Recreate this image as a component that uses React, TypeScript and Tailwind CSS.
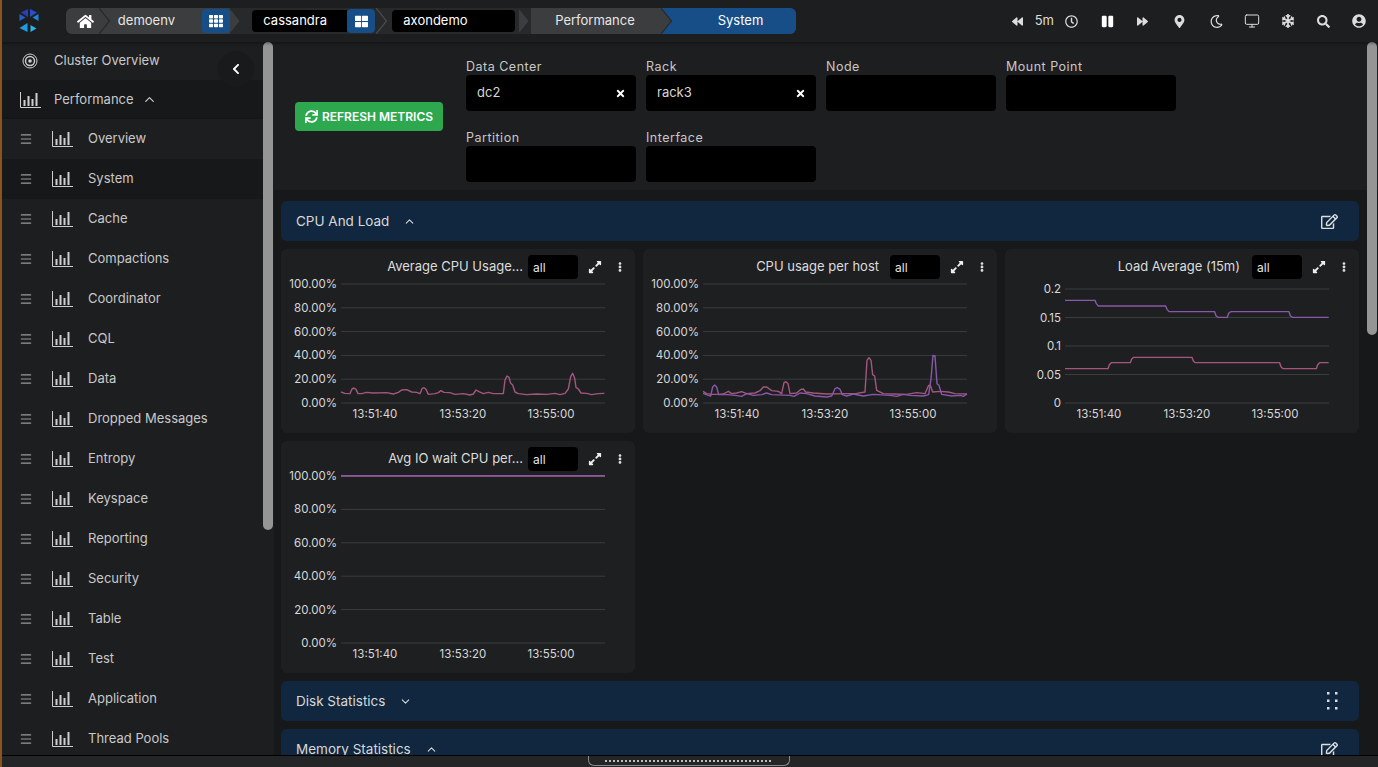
import { FaHome, FaTh, FaThLarge, FaSync, FaBackward, FaForward, FaRegClock, FaPause, FaMapMarkerAlt, FaRegMoon, FaSnowflake, FaSearch, FaUserCircle, FaTimes, FaExpandAlt, FaEllipsisV, FaRegEdit, FaChevronLeft } from "react-icons/fa";
import { Monitor, Menu, ChevronUp, ChevronDown } from "lucide-react";

type Line = { color: string; points: number[][] };

interface ChartProps {
  title: string;
  titleClass: string;
  height: number;
  ox: number;
  oy: number;
  top: number;
  bottom: number;
  grid: string[];
  lines: Line[];
}

const pink = "#a4567f";
const purple = "#8a58a8";

const cpuAvg = [[213,606],[225,610],[240,611],[246,597],[252,594],[258,598],[264,611],[275,611],[290,607],[310,609],[350,608],[370,612],[385,607],[395,600],[410,599],[425,606],[440,607],[450,611],[456,596],[462,593],[468,598],[475,613],[495,611],[505,608],[513,602],[522,607],[540,608],[555,613],[580,611],[600,615],[610,612],[618,600],[627,605],[640,611],[655,607],[670,611],[700,611],[705,570],[711,558],[717,562],[722,580],[728,585],[735,606],[745,611],[770,614],[800,612],[830,613],[855,610],[870,614],[885,610],[895,597],[902,560],[908,550],[914,565],[918,592],[925,597],[933,609],[950,610],[965,614],[985,611],[1003,610]];

const cpuHostA = [[189,438],[200,445],[215,447],[235,447],[250,446],[265,438],[275,445],[290,443],[305,439],[320,445],[345,443],[360,436],[370,425],[380,425],[395,436],[415,438],[425,445],[432,412],[438,409],[444,415],[450,445],[470,443],[483,432],[490,431],[497,440],[520,443],[560,446],[620,445],[650,444],[675,440],[681,345],[687,337],[693,345],[698,388],[704,392],[710,435],[730,445],[760,446],[800,447],[830,442],[855,445],[866,420],[871,420],[878,440],[900,438],[925,440],[945,445],[981,446]];

const cpuHostB = [[189,444],[205,450],[212,452],[218,425],[224,419],[230,425],[236,448],[265,448],[285,450],[305,453],[320,445],[340,450],[365,448],[380,443],[395,448],[450,450],[462,453],[480,443],[500,445],[525,452],[560,455],[575,452],[585,430],[592,427],[600,432],[607,448],[620,452],[640,446],[670,452],[700,447],[750,450],[770,453],[790,447],[810,450],[850,452],[866,448],[873,400],[879,330],[885,332],[891,415],[897,420],[905,447],[935,452],[960,450],[970,453],[981,446]];

const loadA = [[196,332],[286,332],[290,342],[296,349],[498,349],[502,359],[508,366],[645,366],[649,378],[655,383],[683,383],[687,371],[693,366],[868,366],[872,378],[878,383],[987,383]];
const loadB = [[196,537],[325,537],[329,525],[335,519],[392,519],[396,508],[402,503],[577,503],[581,514],[587,519],[840,519],[844,531],[850,537],[950,537],[954,525],[960,519],[987,519]];

const percent = ["100.00%", "80.00%", "60.00%", "40.00%", "20.00%", "0.00%"];

function Chart({ title, titleClass, height, ox, oy, top, bottom, grid, lines }: ChartProps) {
  const step = (bottom - top) / (grid.length - 1);
  return (
    <div className="rounded-md bg-[#1e1f21]">
      <div className="flex h-[30px] items-center justify-end pr-[10px] pt-[5px] text-[#dcdcdc]">
        <span className={`text-[13px] ${titleClass}`}>{title}</span>
        <span className="flex h-6 w-[50px] items-center rounded bg-black pl-[5px] pt-[2px] text-xs text-[#e6e6e6]">all</span>
        <FaExpandAlt size={14} className="ml-[10px] mr-[13px] text-[#eeeeee]" />
        <FaEllipsisV size={10} className="text-[#dddddd]" />
      </div>
      <svg width={354} height={height} className="block" fontFamily="Inter, sans-serif" fontSize={11.5} fill="#d8d8d8">
        {grid.map((label, i) => (
          <g key={label}>
            <line x1={60} x2={324} y1={top + step * i} y2={top + step * i} stroke="#3b3c3e" strokeWidth={1} />
            <text x={56} y={top + step * i + 4} textAnchor="end">{label}</text>
          </g>
        ))}
        {["13:51:40", "13:53:20", "13:55:00"].map((t, i) => (
          <text key={t} x={94 + i * 88} y={height - 15} textAnchor="middle">{t}</text>
        ))}
        {lines.map((l, i) => (
          <polyline
            key={i}
            fill="none"
            stroke={l.color}
            strokeWidth={1.4}
            strokeLinejoin="round"
            points={l.points.map(([x, y]) => `${(x - ox) / 3 + 60},${(y - oy) / 3 + top}`).join(" ")}
          />
        ))}
      </svg>
    </div>
  );
}

function BarsIcon() {
  return (
    <svg width="21" height="16" viewBox="0 0 21 16" fill="none" className="shrink-0 text-[#cfcfcf]">
      <path d="M0.5 0v15.5H21" stroke="currentColor" strokeWidth="1" />
      <rect x="3.5" y="8" width="2" height="6" fill="currentColor" />
      <rect x="7.5" y="4" width="2" height="10" fill="currentColor" />
      <rect x="11.5" y="7" width="2" height="7" fill="currentColor" />
      <rect x="15.5" y="1" width="2" height="13" fill="currentColor" />
    </svg>
  );
}

function Logo() {
  return (
    <svg width="24" height="26" viewBox="0 0 24 26" className="shrink-0">
      <path d="M11 1 4 4.5 11 9z" fill="#2b3fb5" />
      <path d="M13 1l7 3.5L13 9z" fill="#2750c4" />
      <path d="M2.5 6v7l6-3.5z" fill="#2560c8" />
      <path d="M21.5 6v7l-6-3.5z" fill="#1c86d8" />
      <path d="M2.5 15v5l6-2.5 2-3z" fill="#1b7fd6" opacity="0" />
      <path d="M2.5 20l8-5v9z" fill="#1e9be6" />
      <path d="M13.5 17v7l6-3.5z" fill="#2bb4ea" />
    </svg>
  );
}

function Chev({ bg }: { bg: string }) {
  return (
    <svg width="12" height="26" viewBox="0 0 12 26" className={`shrink-0 ${bg}`}>
      <path d="M0 0 10.5 13 0 26z" fill="#3c3d3f" />
      <path d="M0 0 10.5 13 0 26" fill="none" stroke="#28292b" strokeWidth="1.2" />
    </svg>
  );
}

function Crumb({ name, wide, icon, first }: { name: string; wide: string; icon: React.ReactNode; first?: boolean }) {
  return (
    <div className={`flex h-[24px] items-center overflow-hidden rounded ${first ? "" : "ml-[2px]"}`}>
      <span className={`flex h-[22px] items-center rounded-l bg-black pl-[11px] text-[13px] text-white ${wide}`}>{name}</span>
      {icon}
    </div>
  );
}

function Breadcrumb() {
  return (
    <div className="ml-[25px] flex h-[26px] w-[730px] items-center rounded-md bg-[#3c3d3f] text-[13px] text-[#e6e6e6]">
      <span className="flex w-[33px] justify-end pr-[5px] text-white"><FaHome size={17} /></span>
      <Chev bg="bg-transparent" />
      <span className="ml-[7px] w-[85px]">demoenv</span>
      <span className="flex h-6 w-7 items-center justify-center rounded-sm bg-[#174e87] text-white"><FaTh size={14} /></span>
      <Chev bg="bg-[#28292b]" />
      <div className="flex h-full flex-1 items-center bg-[#28292b]">
        <div className="ml-[10px]">
          <Crumb first name="cassandra" wide="w-[95px]" icon={<span className="flex h-6 w-7 items-center justify-center rounded-sm bg-[#174e87] text-white"><FaThLarge size={13} /></span>} />
        </div>
        <svg width="12" height="26" viewBox="0 0 12 26" className="ml-[1px] shrink-0">
          <path d="M0 0 10.5 13 0 26" fill="none" stroke="#4a4b4d" strokeWidth="1.2" />
        </svg>
        <div className="ml-[4px]">
          <Crumb first name="axondemo" wide="w-[123px] rounded-r" icon={null} />
        </div>
        <span className="ml-[2px] h-full w-[2px] bg-[#28292b]" />
      </div>
      <Chev bg="bg-[#28292b]" />
      <span className="flex w-[130px] justify-center pr-[2px]">Performance</span>
      <div className="flex h-full w-[136px] items-center overflow-hidden rounded-r-md bg-[#174e87] text-white">
        <Chev bg="bg-[#174e87]" />
        <span className="ml-[45px]">System</span>
      </div>
    </div>
  );
}

function TopActions() {
  return (
    <div className="ml-auto flex items-center pr-[12px] text-[#dddddd]">
      <FaBackward size={11} />
      <span className="ml-[12px] text-[13px]">5m</span>
      <FaRegClock size={13} className="ml-[11px]" />
      <FaPause size={13} className="ml-[23px] text-white" />
      <FaForward size={11} className="ml-[23px]" />
      <FaMapMarkerAlt size={13} className="ml-[25px]" />
      <FaRegMoon size={13} className="ml-[24px]" />
      <Monitor size={16} strokeWidth={1.5} className="ml-[21px]" />
      <FaSnowflake size={14} className="ml-[21px]" />
      <FaSearch size={13} className="ml-[22px]" />
      <FaUserCircle size={14} className="ml-[22px]" />
    </div>
  );
}

const menuItems = ["Overview", "System", "Cache", "Compactions", "Coordinator", "CQL", "Data", "Dropped Messages", "Entropy", "Keyspace", "Reporting", "Security", "Table", "Test", "Application", "Thread Pools"];

function Sidebar() {
  return (
    <aside className="relative h-full w-[274px] shrink-0 overflow-hidden bg-[#1d1e20] text-[13px] text-[#c9c9c9]">
      <div className="mr-[11px]">
        <div className="flex h-[38px] items-center pl-[22px] text-[13px] shadow-[0_2px_4px_rgba(0,0,0,0.5)]">
          <svg width="16" height="16" viewBox="0 0 16 16" fill="none" stroke="#cfcfcf" className="shrink-0">
            <circle cx="8" cy="8" r="7" strokeWidth="1" />
            <circle cx="8" cy="8" r="4.5" strokeWidth="1.4" />
            <circle cx="8" cy="8" r="1.8" fill="#cfcfcf" strokeWidth="0" />
          </svg>
          <span className="ml-[16px]">Cluster Overview</span>
        </div>
        <div className="flex h-[39px] items-center bg-[#17181a] pl-[20px]">
          <BarsIcon />
          <span className="ml-[13px]">Performance</span>
          <ChevronUp size={15} className="ml-[8px]" />
        </div>
        {menuItems.map((item) => (
          <div
            key={item}
            className={`flex h-10 items-center pl-[19px] ${item === "System" ? "bg-[#17181a]" : ""} ${item === "Overview" ? "shadow-[0_1px_3px_rgba(0,0,0,0.5)]" : ""}`}
          >
            <Menu size={14} className="shrink-0 text-[#9a9a9a]" />
            <span className="ml-[19px]"><BarsIcon /></span>
            <span className="ml-[15px]">{item}</span>
          </div>
        ))}
      </div>
      <button className="absolute left-[218px] top-[9px] flex h-9 w-9 items-center justify-center rounded-full bg-[#191a1c] text-white">
        <FaChevronLeft size={12} />
      </button>
      <div className="absolute left-[263px] top-0 h-[488px] w-[10px] rounded-full bg-[#959595]" />
    </aside>
  );
}

function Field({ label, value }: { label: string; value?: string }) {
  return (
    <div>
      <div className="h-[17px] text-[12.5px] leading-[17px] tracking-[0.5px] text-[#c8c8c8]">{label}</div>
      <div className="flex h-9 items-center justify-between rounded bg-black pl-[11px] pr-[10px] text-[13px] text-[#d6d6d6]">
        <span>{value}</span>
        {value && <FaTimes size={11} className="text-white" />}
      </div>
    </div>
  );
}

function FilterBar() {
  return (
    <div className="flex h-[148px] shrink-0 bg-[#1d1e20] pl-[21px] pt-[16px]">
      <button className="mt-[44px] flex h-[29px] w-[148px] items-center justify-center gap-[4px] rounded-sm bg-[#2ea84f] text-[12px] font-semibold text-white">
        <FaSync size={13} />
        REFRESH METRICS
      </button>
      <div className="ml-[23px] grid grid-cols-[repeat(4,170px)] gap-x-[10px] gap-y-[9px]">
        <Field label="Data Center" value="dc2" />
        <Field label="Rack" value="rack3" />
        <Field label="Node" />
        <Field label="Mount Point" />
        <Field label="Partition" />
        <Field label="Interface" />
      </div>
    </div>
  );
}

function GripIcon() {
  return (
    <svg width="11" height="18" viewBox="0 0 11 18" fill="#dddddd">
      {[0, 7.5, 15].map((y) => (
        <g key={y}>
          <rect x="0" y={y} width="2.5" height="2.5" />
          <rect x="8" y={y} width="2.5" height="2.5" />
        </g>
      ))}
    </svg>
  );
}

function SectionHeader({ title, open, action }: { title: string; open: boolean; action: React.ReactNode }) {
  return (
    <div className="flex h-10 shrink-0 items-center justify-between rounded-md bg-[#10273f] pl-[15px] pr-[21px] text-[13.5px] text-[#d8d8d8]">
      <div className="flex items-center">
        <span>{title}</span>
        {open ? <ChevronUp size={13} className="ml-[14px]" /> : <ChevronDown size={13} className="ml-[14px]" />}
      </div>
      {action}
    </div>
  );
}

export default function App() {
  return (
    <div className="relative flex h-[767px] w-[1378px] flex-col overflow-hidden bg-[#17181a] font-['Inter',sans-serif]">
      <header className="z-10 flex h-[42px] shrink-0 items-center bg-[#1d1e20] pl-[17px] shadow-[0_1px_3px_rgba(0,0,0,0.45)]">
        <Logo />
        <Breadcrumb />
        <TopActions />
      </header>
      <div className="flex min-h-0 flex-1">
        <Sidebar />
        <main className="relative flex min-w-0 flex-1 flex-col overflow-hidden">
          <FilterBar />
          <div className="flex flex-col gap-2 pl-[7px] pr-[19px] pt-[11px]">
            <SectionHeader title="CPU And Load" open action={<FaRegEdit size={17} className="text-[#dddddd]" />} />
            <div className="grid grid-cols-3 gap-2">
              <Chart title="Average CPU Usage..." titleClass="mr-[5px]" height={154} ox={213} oy={282} top={5} bottom={124} grid={percent} lines={[{ color: pink, points: cpuAvg }]} />
              <Chart title="CPU usage per host" titleClass="mr-[11px]" height={154} ox={189} oy={116} top={5} bottom={124} grid={percent} lines={[{ color: pink, points: cpuHostA }, { color: purple, points: cpuHostB }]} />
              <Chart title="Load Average (15m)" titleClass="mr-[12px]" height={154} ox={196} oy={298} top={10} bottom={124} grid={["0.2", "0.15", "0.1", "0.05", "0"]} lines={[{ color: purple, points: loadA }, { color: pink, points: loadB }]} />
              <Chart title="Avg IO wait CPU per..." titleClass="mr-[5px]" height={202} ox={0} oy={501} top={5} bottom={172} grid={percent} lines={[{ color: pink, points: [[0, 501], [792, 501]] }, { color: purple, points: [[0, 500], [792, 500]] }]} />
            </div>
            <SectionHeader title="Disk Statistics" open={false} action={<GripIcon />} />
            <SectionHeader title="Memory Statistics" open action={<FaRegEdit size={17} className="text-[#dddddd]" />} />
          </div>
          <div className="absolute left-[1093px] top-0 h-[293px] w-[10px] rounded-full bg-[#959595]" />
        </main>
      </div>
      <div className="absolute bottom-0 left-0 right-0 z-20 flex h-3 justify-center border-t border-black bg-[#242526]">
        <div className="flex h-[10px] w-[202px] items-center justify-center rounded-b-md border border-t-0 border-[#8a8a8a] text-[7px] leading-none tracking-[0.5px] text-[#b5b5b5]">
          <span className="h-[2px] w-[168px] bg-[repeating-linear-gradient(90deg,#bbbbbb_0,#bbbbbb_2px,transparent_2px,transparent_4px)]" />
        </div>
      </div>
      <div className="absolute bottom-0 left-0 top-0 z-30 w-[2px] bg-[#8a5320]" />
    </div>
  );
}
